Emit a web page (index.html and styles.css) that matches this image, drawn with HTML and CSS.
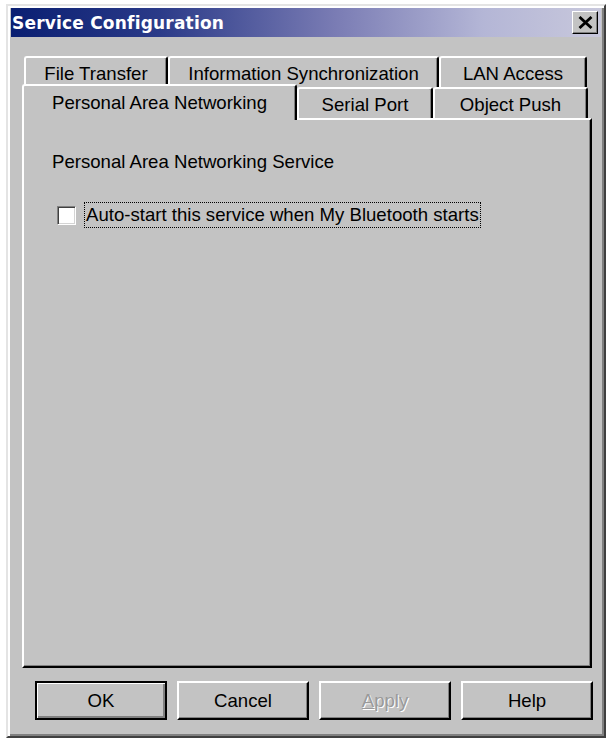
FILE: index.html
```html
<!DOCTYPE html>
<html>
<head>
<meta charset="utf-8">
<link rel="stylesheet" href="styles.css">
</head>
<body>
<div class="window">
  <div class="titlebar">
    <span class="title">Service Configuration</span>
    <div class="close">
      <svg width="15" height="13" viewBox="0 0 15 13"><path d="M1.5 1 L13.5 12 M13.5 1 L1.5 12" stroke="#000" stroke-width="2.8" fill="none"/></svg>
    </div>
  </div>
  <div class="body">
    <div class="tabs">
      <div class="tabrow back">
        <div class="tab t-ft">File Transfer</div>
        <div class="tab t-is">Information Synchronization</div>
        <div class="tab t-lan">LAN Access</div>
      </div>
      <div class="tabrow front">
        <div class="tab sel t-pan">Personal Area Networking</div>
        <div class="tab t-sp">Serial Port</div>
        <div class="tab t-op">Object Push</div>
      </div>
    </div>
    <div class="panel">
      <div class="heading">Personal Area Networking Service</div>
      <div class="check">
        <span class="box"></span>
        <span class="lbl">Auto-start this service when My Bluetooth starts</span>
      </div>
    </div>
    <div class="buttons">
      <div class="btn default"><span>OK</span></div>
      <div class="btn"><span>Cancel</span></div>
      <div class="btn disabled"><span><u>A</u>pply</span></div>
      <div class="btn"><span>Help</span></div>
    </div>
  </div>
</div>
</body>
</html>
```
FILE: styles.css
```css
html, body {
  margin: 0;
  padding: 0;
  background: #ffffff;
}
body {
  font-family: "Liberation Sans", Arial, sans-serif;
  font-size: 18.6px;
  color: #000;
}
.window {
  box-sizing: border-box;
  margin: 4px 0 0 6px;
  width: 600px;
  height: 734px;
  background: #c3c3c3;
  border: 2px solid;
  border-color: #e4e4e4 #404040 #404040 #e4e4e4;
  box-shadow: inset 2px 2px 0 #ffffff, inset -2px -2px 0 #808080;
  padding: 2px 3px 4px 3px;
  display: flex;
  flex-direction: column;
}
.titlebar {
  height: 29px;
  flex: none;
  background: linear-gradient(to right, #0a1f72 0%, #2a3a88 25%, #7a7cb4 55%, #b4b6d6 80%, #c8c8dc 100%);
  display: flex;
  align-items: center;
  justify-content: space-between;
  padding: 0 3px 0 1px;
}
.title {
  font-family: "DejaVu Sans", Verdana, sans-serif;
  font-weight: bold;
  font-size: 17px;
  letter-spacing: 0.2px;
  color: #ffffff;
}
.close {
  box-sizing: border-box;
  width: 26px;
  height: 23px;
  background: #c3c3c3;
  border: 1px solid;
  border-color: #ffffff #000000 #000000 #ffffff;
  box-shadow: inset -1px -1px 0 #808080;
  display: flex;
  align-items: center;
  justify-content: center;
}
.close svg { display: block; }
.body {
  flex: 1;
  display: flex;
  flex-direction: column;
  padding: 19px 8px 0 11px;
}
.tabs {
  display: flex;
  flex-direction: column;
  position: relative;
  z-index: 1;
}
.tabrow {
  display: flex;
}
.tabrow.back {
  margin-left: 2px;
}
.tab {
  box-sizing: border-box;
  height: 31px;
  border-top: 2px solid #ffffff;
  border-left: 2px solid #ffffff;
  border-right: 2px solid #000000;
  box-shadow: inset -1px 0 0 #808080;
  border-radius: 3px 3px 0 0;
  background: #c3c3c3;
  display: flex;
  align-items: center;
  justify-content: center;
  white-space: nowrap;
  padding-top: 2px;
}
.t-ft { width: 144px; }
.t-is { width: 271px; }
.t-lan { width: 148px; }
.t-pan { width: 275px; }
.t-sp { width: 136px; }
.t-op { width: 155px; }
.tab.sel {
  height: 36px;
  margin-top: -3px;
  margin-bottom: -2px;
  position: relative;
  z-index: 2;
  padding-top: 2px;
  padding-bottom: 2px;
}
.panel {
  flex: 1;
  box-sizing: border-box;
  width: 570px;
  border-top: 2px solid #ffffff;
  border-left: 2px solid #ffffff;
  border-right: 2px solid #000000;
  border-bottom: 2px solid #000000;
  box-shadow: inset -1px -1px 0 #808080;
  padding: 31px 0 0 28px;
}
.heading {
  line-height: 21px;
  height: 21px;
}
.check {
  display: flex;
  align-items: center;
  margin-top: 30px;
}
.box {
  box-sizing: border-box;
  width: 19px;
  height: 19px;
  margin-left: 5px;
  background: #ffffff;
  border: 1px solid;
  border-color: #808080 #ffffff #ffffff #808080;
  box-shadow: inset 1px 1px 0 #404040, inset -1px -1px 0 #d4d4d4;
}
.lbl {
  margin-left: 8px;
  border: 1px dotted #000;
  padding: 1px 1px 2px 1px;
  line-height: 21px;
}
.buttons {
  display: flex;
  gap: 10px;
  margin-top: 13px;
  margin-left: 13px;
  margin-bottom: 12px;
}
.btn {
  box-sizing: border-box;
  width: 132px;
  height: 39px;
  background: #c3c3c3;
  border-top: 2px solid #ffffff;
  border-left: 2px solid #ffffff;
  border-right: 2px solid #000000;
  border-bottom: 2px solid #000000;
  box-shadow: inset -1px -1px 0 #808080;
  display: flex;
  align-items: center;
  justify-content: center;
}
.btn.default {
  border: 2px solid #000000;
  box-shadow: inset 1px 1px 0 #ffffff, inset -2px -2px 0 #808080;
}
.btn.disabled span {
  color: #9a9a9a;
  text-shadow: 1px 1px 0 #ffffff;
}
.btn u { text-decoration: underline; }
```
